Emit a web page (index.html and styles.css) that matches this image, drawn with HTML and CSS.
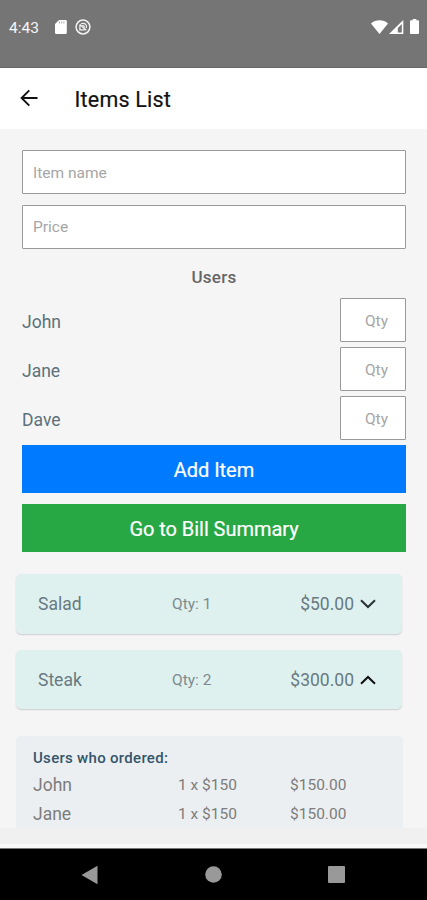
FILE: index.html
```html
<!DOCTYPE html>
<html lang="en">
<head>
<meta charset="utf-8">
<title>Items List</title>
<link rel="stylesheet" href="styles.css">
</head>
<body>
<div class="phone">
  <div class="status">
    <span class="clock">4:43</span>
    <svg class="sd" width="12" height="14" viewBox="0 0 12 14"><path d="M4 0h6.500a1.300 1.300 0 0 1 1.300 1.300v11.400a1.300 1.300 0 0 1-1.300 1.300H1.300A1.300 1.300 0 0 1 0 12.700V4z" fill="#fff"/><path d="M4.500 1.500v2M6.700 1.500v2M8.900 1.500v2" stroke="#aaa" stroke-width="1"/></svg>
    <svg class="badge" width="16" height="16" viewBox="0 0 16 16" fill="none" stroke="#f2f2f2"><circle cx="8" cy="8" r="6.900" stroke-width="1.500"/><path d="M4.900 5.500v5.400h4.800M4.900 5.500l6.400 5.700" stroke-width="1.300"/><path d="M6 4.700c3.400-1.200 6.200.8 5.400 4.300M7.300 6.700c1.500-.2 2.400.7 2.100 2" stroke-width="1.200"/></svg>
    <div class="signals">
      <svg width="17" height="14" viewBox="0 0 17 14"><path d="M0 3.600C4.500-.8 12.500-.8 17 3.600L8.500 14z" fill="#fff"/></svg>
      <svg class="cell" width="15" height="14" viewBox="0 0 15 14"><path d="M14.300 0v14H0z" fill="#fff"/><path d="M12.800 4v8.400H8.800V8z" fill="#757575"/></svg>
      <svg class="battery" width="9" height="15" viewBox="0 0 9 15"><path d="M2.700 0h3.600v1.200h1.700a1 1 0 0 1 1 1V14a1 1 0 0 1-1 1H1a1 1 0 0 1-1-1V2.200a1 1 0 0 1 1-1h1.700z" fill="#fff"/></svg>
    </div>
  </div>
  <header class="header">
    <svg width="18" height="18" viewBox="0 0 18 18" fill="none" stroke="#111" stroke-width="1.900"><path d="M17.500 9H2M9.300 1.300L1.600 9l7.700 7.700"/></svg>
    <h1 class="title">Items List</h1>
  </header>
  <main class="content">
    <div class="form">
      <input class="field" placeholder="Item name">
      <input class="field" placeholder="Price">
      <h2 class="users-title">Users</h2>
      <div class="user"><span>John</span><input class="field qty" placeholder="Qty"></div>
      <div class="user"><span>Jane</span><input class="field qty" placeholder="Qty"></div>
      <div class="user"><span>Dave</span><input class="field qty" placeholder="Qty"></div>
      <button class="btn add">Add Item</button>
      <button class="btn summary">Go to Bill Summary</button>
    </div>
    <div class="card">
      <span class="name">Salad</span><span class="count">Qty: 1</span><span class="price">$50.00</span>
      <svg width="16" height="10" viewBox="0 0 16 10" fill="none" stroke="#263238" stroke-width="2"><path d="M1 1.200l7 6.800 7-6.800"/></svg>
    </div>
    <div class="card">
      <span class="name">Steak</span><span class="count">Qty: 2</span><span class="price">$300.00</span>
      <svg width="16" height="10" viewBox="0 0 16 10" fill="none" stroke="#111" stroke-width="2"><path d="M1 8.800L8 2l7 6.800"/></svg>
    </div>
    <section class="details">
      <h3 class="details-title">Users who ordered:</h3>
      <div class="order"><span class="who">John</span><span>1 x $150</span><span>$150.00</span></div>
      <div class="order"><span class="who">Jane</span><span>1 x $150</span><span>$150.00</span></div>
    </section>
  </main>
  <div class="footer"></div>
  <nav class="nav">
    <svg width="17" height="20" viewBox="0 0 17 20"><path d="M16.500 .8v18.400L.5 10z" fill="#999"/></svg>
    <svg width="17" height="17" viewBox="0 0 17 17"><circle cx="8.500" cy="8.500" r="8.300" fill="#999"/></svg>
    <svg width="17" height="17" viewBox="0 0 17 17"><rect width="17" height="17" rx="1" fill="#999"/></svg>
  </nav>
</div>
</body>
</html>
```
FILE: styles.css
```css
* { box-sizing: border-box; }
body { margin: 0; font-family: Roboto, "Liberation Sans", sans-serif; }
h1, h2, h3 { margin: 0; }
svg { display: block; flex: none; }

.phone { width: 427px; height: 900px; display: flex; flex-direction: column; overflow: hidden; background: #f5f5f5; }

.status { height: 68px; flex: none; display: flex; align-items: flex-start; padding: 19px 8px 0 9px; background: #757575; border-bottom: 1px solid #696969; }
.clock { width: 46px; font-size: 15.500px; line-height: 19px; color: #f5f5f5; }
.sd { margin-top: 1px; }
.badge { margin-left: 8px; }
.signals { margin-left: auto; display: flex; align-items: flex-start; }
.signals svg { margin-top: 1px; }
.signals .cell { margin-left: 1px; }
.signals .battery { margin: 0 0 0 6px; }

.header { height: 61px; flex: none; display: flex; align-items: center; padding: 0 0 2px 20px; background: #fff; }
.title { margin: 4px 0 0 36.500px; font-size: 21.500px; font-weight: 400; line-height: 26px; letter-spacing: .2px; color: #111; -webkit-text-stroke: .2px #111; }

.content { height: 699px; flex: none; overflow: hidden; padding-top: 21px; }
.form { padding: 0 21px 0 22px; display: flex; flex-direction: column; }
.field { display: block; width: 100%; height: 44px; margin: 0 0 10.500px; padding: 1px 10px 0; border: 1.500px solid #999; border-radius: 1px; background: #fff; font: 15.500px Roboto, "Liberation Sans", sans-serif; }
.field::placeholder { color: #a6a6a6; opacity: 1; }
.users-title { height: 39px; padding-top: 8px; font-size: 17px; font-weight: 500; line-height: 20px; letter-spacing: .3px; text-align: center; color: #666; }
.user { display: flex; align-items: center; justify-content: space-between; height: 44px; margin-bottom: 5px; font-size: 17.500px; color: #5c717a; }
.user span { padding-top: 3px; }
.field.qty { width: 66px; margin: 0; padding: 1px 17px 0 0; text-align: right; }
.btn { height: 48px; padding: 0; border: 0; font: 400 20px Roboto, "Liberation Sans", sans-serif; letter-spacing: -.05px; color: #fff; -webkit-text-stroke: .2px #fff; }
.add { padding-top: 2px; background: #007bff; }
.summary { margin-top: 11px; padding-top: 2px; background: #28a745; }

.card { display: flex; align-items: center; width: 386px; height: 60px; margin: 22px 0 0 16px; padding: 0 26px 0 22px; border-radius: 5px; background: #dff1ee; box-shadow: 0 1px 1.500px rgba(0, 0, 0, .16); font-size: 17.500px; color: #687a82; }
.card + .card { margin-top: 16px; height: 59px; }
.name { width: 134px; }
.count { font-size: 15.500px; color: #7c8b90; }
.price { margin: 0 6px 0 auto; }

.details { width: 387px; height: 120px; margin: 27px 0 0 16px; padding: 12px 17px; border-radius: 5px; background: #eceff1; }
.details-title { font-size: 15px; font-weight: 500; line-height: 20px; letter-spacing: .3px; color: #34566a; }
.order { display: grid; grid-template-columns: 145px 112px 1fr; align-items: center; height: 29px; margin-top: 2px; font-size: 15.500px; color: #7c7c7c; }
.order + .order { margin-top: 0; }
.who { font-size: 17.500px; }

.footer { height: 20px; flex: none; background: #f0f0f0; border-bottom: 4px solid #f8f8f8; }
.nav { height: 52px; flex: none; display: flex; align-items: center; justify-content: center; gap: 106.500px; padding-right: 1px; background: #000; border-top: 1px solid #777; }
```
